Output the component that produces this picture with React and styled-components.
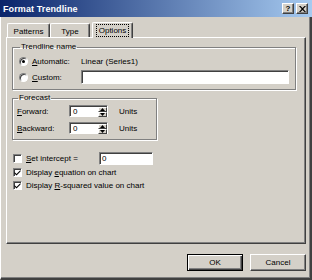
import React from 'react';
import styled, { createGlobalStyle } from 'styled-components';

const Global = createGlobalStyle`
  html, body {
    margin: 0;
    padding: 0;
    background: #d4d0c8;
  }
  * {
    box-sizing: border-box;
  }
`;

const Window = styled.div`
  width: 312px;
  height: 280px;
  display: flex;
  flex-direction: column;
  background: #d4d0c8;
  font-family: 'Liberation Sans', Arial, sans-serif;
  font-size: 8px;
  color: #000;
  overflow: hidden;
`;

const TitleBar = styled.div`
  height: 17px;
  flex: none;
  display: flex;
  align-items: center;
  padding: 0 4px 0 3px;
  background: linear-gradient(to right, #0a246a, #a6caf0);
`;

const Title = styled.div`
  flex: 1;
  color: #fff;
  font-weight: bold;
  font-size: 9px;
  letter-spacing: 0.1px;
`;

const CaptionButton = styled.div`
  width: 12px;
  height: 11px;
  margin-left: ${p => p.$gap || 1}px;
  background: #d4d0c8;
  border: 1px solid;
  border-color: #fff #404040 #404040 #fff;
  box-shadow: inset -1px -1px #808080;
  display: flex;
  align-items: center;
  justify-content: center;
  font-weight: bold;
  font-size: 8px;
  line-height: 1;
`;

const Body = styled.div`
  flex: 1;
  display: flex;
  flex-direction: column;
  padding: 4px 5px 0 5px;
  border-left: 1px solid #fff;
  border-right: 2px solid #404040;
  border-bottom: 2px solid #404040;
  box-shadow: inset -1px -1px #808080;
`;

const TabRow = styled.div`
  display: flex;
  align-items: flex-end;
  padding-left: 1px;
  height: 16px;
  position: relative;
  z-index: 1;
`;

const Tab = styled.div`
  width: ${p => p.$w}px;
  height: ${p => (p.$active ? 16 : 14)}px;
  margin-left: ${p => (p.$active ? 2 : 0)}px;
  margin-bottom: ${p => (p.$active ? -1 : 0)}px;
  background: #d4d0c8;
  border-top: 1px solid #fff;
  border-left: 1px solid #fff;
  border-right: 1px solid #404040;
  box-shadow: inset -1px 0 #808080;
  border-radius: 2px 2px 0 0;
  display: flex;
  align-items: center;
  justify-content: center;
  padding-top: ${p => (p.$active ? 0 : 1)}px;
`;

const Focus = styled.span`
  outline: 1px dotted #000;
  outline-offset: 1px;
  padding: 0 1px;
`;

const Panel = styled.div`
  width: 300px;
  height: 207px;
  border: 1px solid;
  border-color: #fff #404040 #404040 #fff;
  box-shadow: inset -1px -1px #808080;
  padding: 4px 0 0 5px;
  display: flex;
  flex-direction: column;
`;

const Group = styled.fieldset`
  width: ${p => p.$w}px;
  margin: ${p => p.$mt}px 0 0 0;
  padding: 0 0 ${p => p.$pb}px ${p => p.$pl}px;
  min-width: 0;
  border: 1px solid #808080;
  box-shadow: 1px 1px #fff, inset 1px 1px #fff;
  display: flex;
  flex-direction: column;
  gap: ${p => p.$gap}px;
`;

const Legend = styled.legend`
  font-size: 8px;
  line-height: 10px;
  padding: 0 1px;
  margin-left: 1px;
  margin-bottom: ${p => p.$mb}px;
`;

const Row = styled.div`
  display: flex;
  align-items: center;
  height: ${p => p.$h || 13}px;
  margin-top: ${p => p.$mt || 0}px;
  padding-left: ${p => p.$pl || 0}px;
  white-space: nowrap;
`;

const Choice = styled.div`
  width: ${p => p.$w}px;
  flex: none;
  display: flex;
  align-items: center;
  gap: 4px;
`;

const Radio = styled.span`
  width: 9px;
  height: 9px;
  flex: none;
  border-radius: 50%;
  background: #fff;
  border: 1px solid;
  border-color: #808080 #fff #fff #808080;
  box-shadow: inset 1px 1px #404040;
  display: flex;
  align-items: center;
  justify-content: center;
  &::after {
    content: '';
    width: 3px;
    height: 3px;
    border-radius: 50%;
    background: ${p => (p.$on ? '#000' : 'transparent')};
  }
`;

const Check = styled.span`
  width: 9px;
  height: 9px;
  flex: none;
  background: #fff;
  border: 1px solid;
  border-color: #808080 #fff #fff #808080;
  box-shadow: inset 1px 1px #404040;
  display: flex;
  align-items: center;
  justify-content: center;
  margin-right: 4px;
`;

const U = styled.span`
  text-decoration: underline;
`;

const Field = styled.div`
  width: ${p => p.$w}px;
  height: ${p => p.$h}px;
  flex: none;
  background: #fff;
  border: 1px solid;
  border-color: #808080 #fff #fff #808080;
  box-shadow: inset 1px 1px #404040;
  display: flex;
  align-items: center;
  padding-left: 2px;
`;

const FieldLabel = styled.div`
  width: ${p => p.$w}px;
  flex: none;
`;

const Spin = styled.div`
  width: 39px;
  height: 12px;
  flex: none;
  display: flex;
  background: #fff;
  border: 1px solid;
  border-color: #808080 #fff #fff #808080;
  box-shadow: inset 1px 1px #404040;
`;

const SpinText = styled.div`
  flex: 1;
  padding: 1px 0 0 3px;
  line-height: 9px;
`;

const SpinButtons = styled.div`
  width: 9px;
  display: flex;
  flex-direction: column;
  padding: 1px 0 0 0;
`;

const SpinBtn = styled.div`
  flex: 1;
  background: #d4d0c8;
  border: 1px solid;
  border-color: #fff #404040 #404040 #fff;
  display: flex;
  align-items: center;
  justify-content: center;
`;

const Units = styled.span`
  margin-left: 11px;
`;

const Footer = styled.div`
  display: flex;
  justify-content: flex-end;
  gap: 7px;
  margin-top: 10px;
  width: 300px;
`;

const Button = styled.div`
  width: 56px;
  height: 17px;
  background: #d4d0c8;
  border: 1px solid;
  border-color: ${p => (p.$default ? '#000' : '#fff #404040 #404040 #fff')};
  box-shadow: ${p =>
    p.$default
      ? 'inset 1px 1px #fff, inset -1px -1px #404040, inset -2px -2px #808080'
      : 'inset -1px -1px #808080'};
  display: flex;
  align-items: center;
  justify-content: center;
`;

const Arrow = ({ up }) => (
  <svg width="5" height="3" viewBox="0 0 5 3">
    <path d={up ? 'M2.5 0 L5 3 L0 3 Z' : 'M0 0 L5 0 L2.5 3 Z'} fill="#000" />
  </svg>
);

const Tick = () => (
  <svg width="7" height="7" viewBox="0 0 7 7">
    <path d="M0.5 3 L2.5 5 L6.5 1 L6.5 2.6 L2.5 6.6 L0.5 4.6 Z" fill="#000" />
  </svg>
);

const Close = () => (
  <svg width="7" height="6" viewBox="0 0 7 6">
    <path d="M0 0 L1.5 0 L3.5 2 L5.5 0 L7 0 L4.3 3 L7 6 L5.5 6 L3.5 4 L1.5 6 L0 6 L2.7 3 Z" fill="#000" />
  </svg>
);

const SpinBox = ({ value }) => (
  <Spin>
    <SpinText>{value}</SpinText>
    <SpinButtons>
      <SpinBtn>
        <Arrow up />
      </SpinBtn>
      <SpinBtn>
        <Arrow />
      </SpinBtn>
    </SpinButtons>
  </Spin>
);

export default function App() {
  return (
    <>
      <Global />
      <Window>
        <TitleBar>
          <Title>Format Trendline</Title>
          <CaptionButton>?</CaptionButton>
          <CaptionButton $gap={2}>
            <Close />
          </CaptionButton>
        </TitleBar>
        <Body>
          <TabRow>
            <Tab $w={43}>Patterns</Tab>
            <Tab $w={40}>Type</Tab>
            <Tab $w={41} $active>
              <Focus>Options</Focus>
            </Tab>
          </TabRow>
          <Panel>
            <Group $w={284} $mt={0} $pb={5} $pl={6} $gap={2}>
              <Legend $mb={2}>Trendline name</Legend>
              <Row $h={14}>
                <Choice $w={62}>
                  <Radio $on />
                  <span>
                    <U>A</U>utomatic:
                  </span>
                </Choice>
                <span>Linear (Series1)</span>
              </Row>
              <Row $h={14}>
                <Choice $w={62}>
                  <Radio />
                  <span>
                    <U>C</U>ustom:
                  </span>
                </Choice>
                <Field $w={208} $h={14} />
              </Row>
            </Group>
            <Group $w={145} $mt={3} $pb={5} $pl={4} $gap={5}>
              <Legend $mb={2}>Forecast</Legend>
              <Row $h={12}>
                <FieldLabel $w={52}>
                  <U>F</U>orward:
                </FieldLabel>
                <SpinBox value="0" />
                <Units>Units</Units>
              </Row>
              <Row $h={12}>
                <FieldLabel $w={52}>
                  <U>B</U>ackward:
                </FieldLabel>
                <SpinBox value="0" />
                <Units>Units</Units>
              </Row>
            </Group>
            <Row $h={13} $mt={12} $pl={1}>
              <Check />
              <FieldLabel $w={73}>
                <U>S</U>et intercept =
              </FieldLabel>
              <Field $w={54} $h={13}>
                0
              </Field>
            </Row>
            <Row $h={13} $mt={1} $pl={1}>
              <Check>
                <Tick />
              </Check>
              <span>
                Display <U>e</U>quation on chart
              </span>
            </Row>
            <Row $h={13} $pl={1}>
              <Check>
                <Tick />
              </Check>
              <span>
                Display <U>R</U>-squared value on chart
              </span>
            </Row>
          </Panel>
          <Footer>
            <Button $default>OK</Button>
            <Button>Cancel</Button>
          </Footer>
        </Body>
      </Window>
    </>
  );
}
